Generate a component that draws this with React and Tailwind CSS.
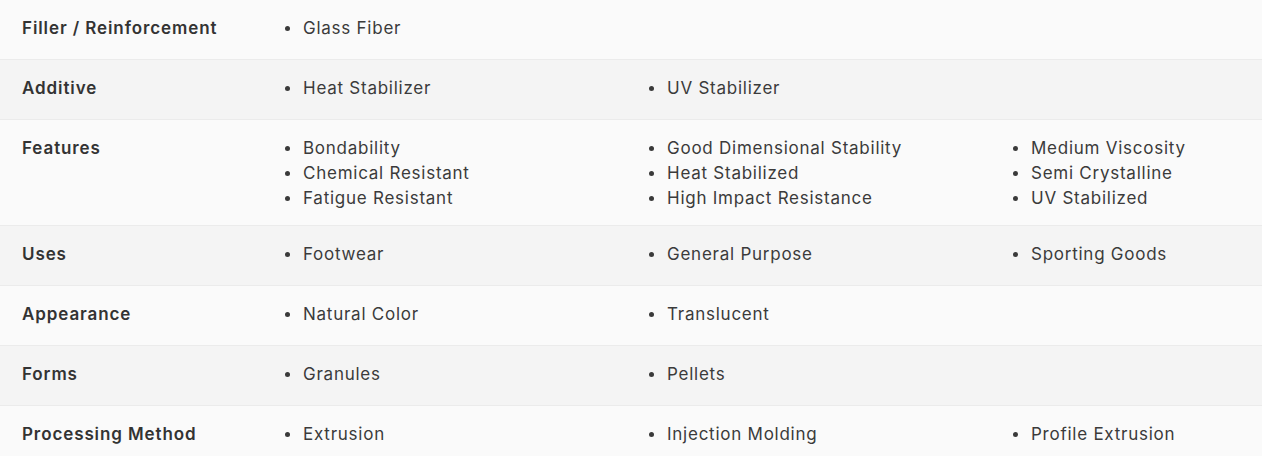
const ROWS = [
  { label: "Filler / Reinforcement", cols: [["Glass Fiber"]] },
  { label: "Additive", cols: [["Heat Stabilizer"], ["UV Stabilizer"]] },
  {
    label: "Features",
    cols: [
      ["Bondability", "Chemical Resistant", "Fatigue Resistant"],
      ["Good Dimensional Stability", "Heat Stabilized", "High Impact Resistance"],
      ["Medium Viscosity", "Semi Crystalline", "UV Stabilized"],
    ],
  },
  { label: "Uses", cols: [["Footwear"], ["General Purpose"], ["Sporting Goods"]] },
  { label: "Appearance", cols: [["Natural Color"], ["Translucent"]] },
  { label: "Forms", cols: [["Granules"], ["Pellets"]] },
  {
    label: "Processing Method",
    cols: [["Extrusion"], ["Injection Molding"], ["Profile Extrusion"]],
  },
];

function Item({ text }) {
  return (
    <li className="flex items-center h-[25px]">
      <span className="w-[5px] h-[5px] rounded-full bg-[#3a3a3a] shrink-0" />
      <span className="ml-[13px] whitespace-nowrap">{text}</span>
    </li>
  );
}

export default function App() {
  return (
    <div
      className="w-[1262px] min-h-screen bg-[#fafafa] text-[17px] leading-[25px] tracking-[0.75px] text-[#3b3b3b]"
      style={{ fontFamily: "Inter, 'Noto Sans', sans-serif" }}
    >
      {ROWS.map((row, i) => (
        <div
          key={row.label}
          className={
            "grid grid-cols-[285px_364px_364px_1fr] min-h-[60px] pt-[16px] pb-[14px] border-b border-[#ebebeb] " +
            (i % 2 === 1 ? "bg-[#f4f4f4]" : "bg-[#fafafa]")
          }
        >
          <div className="pl-[22px] font-semibold tracking-[0.9px] text-[#333333] whitespace-nowrap">
            {row.label}
          </div>
          {row.cols.map((col, j) => (
            <ul key={j} className="flex flex-col">
              {col.map((t) => (
                <Item key={t} text={t} />
              ))}
            </ul>
          ))}
        </div>
      ))}
    </div>
  );
}
